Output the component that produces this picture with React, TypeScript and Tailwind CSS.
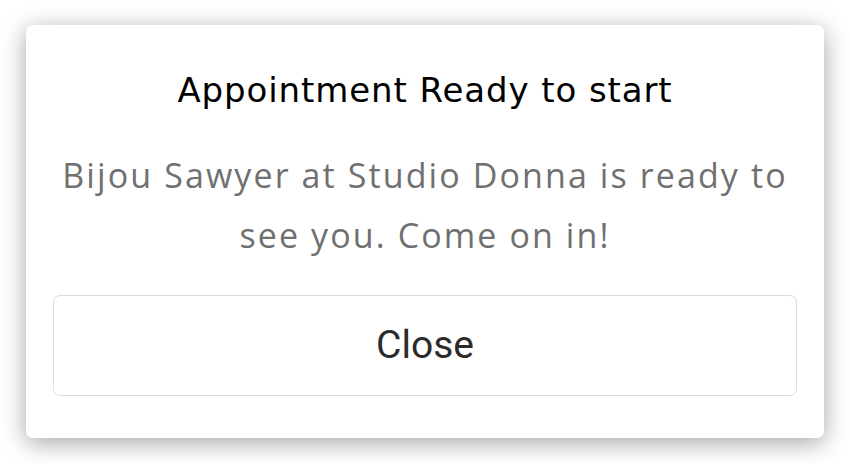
export default function App() {
  return (
    <div className="w-[850px] h-[464px] bg-white pt-[25px] pl-[26px] overflow-hidden">
      <div className="w-[798px] h-[413px] bg-white rounded-[7px] shadow-[0_5px_24px_rgba(0,0,0,0.36)] px-[27px] pt-[45px] flex flex-col items-center">
        <h1 className="text-[34px] leading-[40px] tracking-[0.9px] text-black font-['DejaVu_Sans',sans-serif]">
          Appointment Ready to start
        </h1>
        <p className="mt-[35px] w-[744px] text-[34px] leading-[60px] tracking-[2.1px] text-[#707070] text-center font-['Open_Sans',sans-serif]">
          Bijou Sawyer at Studio Donna is ready to see you. Come on in!
        </p>
        <button className="mt-[30px] w-full h-[101px] border border-[#dcdcdc] rounded-[7px] bg-white text-[#2b2b2b] text-[39px] font-['Roboto',sans-serif]">
          Close
        </button>
      </div>
    </div>
  )
}
